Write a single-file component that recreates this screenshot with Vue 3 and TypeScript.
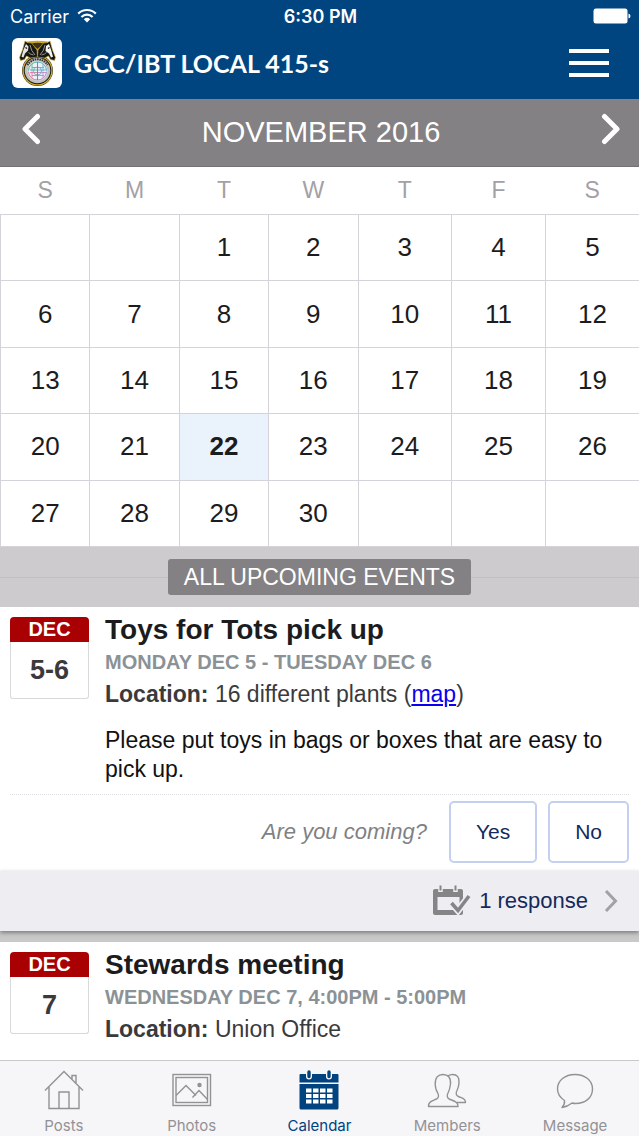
<script setup lang="ts">
import { ref } from 'vue'

interface EventItem {
  id: number
  month: string
  days: string
  title: string
  when: string
  place: string
  hasMap: boolean
  description: string
  responses: string
}

const weekdays: string[] = ['S', 'M', 'T', 'W', 'T', 'F', 'S']
const firstWeekday = 2
const dayCount = 30
const today = 22

const weeks: (number | null)[][] = Array.from({ length: 5 }, (_, w) =>
  Array.from({ length: 7 }, (_, d) => {
    const day = w * 7 + d - firstWeekday + 1
    return day >= 1 && day <= dayCount ? day : null
  })
)

const events: EventItem[] = [
  {
    id: 1,
    month: 'DEC',
    days: '5-6',
    title: 'Toys for Tots pick up',
    when: 'MONDAY DEC 5 - TUESDAY DEC 6',
    place: '16 different plants',
    hasMap: true,
    description: 'Please put toys in bags or boxes that are easy to pick up.',
    responses: '1 response'
  },
  {
    id: 2,
    month: 'DEC',
    days: '7',
    title: 'Stewards meeting',
    when: 'WEDNESDAY DEC 7, 4:00PM - 5:00PM',
    place: 'Union Office',
    hasMap: false,
    description: '',
    responses: ''
  }
]

const tabs: string[] = ['Posts', 'Photos', 'Calendar', 'Members', 'Message']
const activeTab = ref<string>('Calendar')
</script>

<template>
  <div class="app">
    <header class="top">
      <div class="status">
        <span class="carrier">
          Carrier
          <svg class="wifi" viewBox="0 0 20 16" aria-hidden="true">
            <path d="M1.2 5.6a12.6 12.6 0 0 1 17.6 0M4.4 9a8 8 0 0 1 11.2 0" fill="none" stroke="#fff" stroke-width="2.2" />
            <path d="M6.8 11.3a4.7 4.7 0 0 1 6.4 0L10 14.6z" fill="#fff" />
          </svg>
        </span>
        <span class="clock">6:30 PM</span>
        <span class="power">
          <svg class="battery" viewBox="0 0 38 16" aria-hidden="true">
            <rect x="0.5" y="0.5" width="34" height="15" rx="2.5" fill="#fff" />
            <path d="M35.5 5.5q2 .5 2 2.5t-2 2.5z" fill="#fff" />
          </svg>
        </span>
      </div>
      <div class="nav">
        <svg class="logo" viewBox="0 0 50 50" aria-hidden="true">
          <rect width="50" height="50" rx="6" fill="#fff" />
          <circle cx="25.500" cy="32.500" r="15.400" fill="#151512" />
          <circle cx="25.500" cy="32.500" r="14.400" fill="none" stroke="#d0ac2c" stroke-width="1.300" />
          <path d="M15 3.500Q25.500 2 36 3.500L26.500 14h-2z" fill="#c9a72d" />
          <path d="M19 5.500Q25.500 4 32 5.500L25.500 11z" fill="#3a331c" />
          <path d="M13 3l2.500 1.500 4 .5 5.500 7 .5 7-7 1-4-2-2 3.500-4 1-1-3L10.500 12z" fill="#171715" stroke="#d0ac2c" stroke-width="0.600" />
          <path d="M38 3l-2.500 1.500-4 .5-5.500 7-.5 7 7 1 4-2 2 3.500 4 1 1-3L40.500 12z" fill="#171715" stroke="#d0ac2c" stroke-width="0.600" />
          <path d="M14 6l2.500 2.500-.5 4-3 3-1.500 4-2-.8 1.700-6.200z" fill="#e4e4e0" />
          <path d="M37 6l-3 2-.5 5 3.500 2.500 2 4 2-.8-1.700-6.200z" fill="#f6f6f3" />
          <path d="M13.500 9.500l1.500 1M37.500 9.500l-1.500 1" stroke="#151512" stroke-width="1.300" fill="none" />
          <path d="M18 7q1 6 5 10M33 7q-1 6-5 10M16.500 14.500q2 2 5 2.500M34.500 14.500q-2 2-5 2.500" stroke="#a3a39d" stroke-width="0.900" fill="none" />
          <circle cx="25.500" cy="32.500" r="12.800" fill="#c1c1be" />
          <path d="M15.500 27a11.600 11.600 0 0 1 20 0" fill="none" stroke="#34342f" stroke-width="2" stroke-dasharray="1.500 0.800" />
          <circle cx="25.500" cy="33" r="10" fill="#eef1f3" />
          <g fill="none" stroke-width="0.900">
            <circle cx="25.500" cy="33" r="9.200" stroke="#b7c9d2" />
            <path d="M16.500 32.500a9 9 0 0 1 9-8.500M20 29.500h5M20 26v7M18 32h7.500" stroke="#4fb9a2" />
            <path d="M25.500 24a9 9 0 0 1 9 8.500M26 29.500h6M31 26v7M26 32h8" stroke="#58b5d8" />
            <path d="M16.500 34a9 9 0 0 0 9 8M18 34.500h7M20 33.500v6M20 37.500h5" stroke="#e078a5" />
            <path d="M34.500 34a9 9 0 0 1-9 8M26 34.500h8M31 33.500v6M26 37.500h6" stroke="#bd8bd0" />
            <circle cx="25.500" cy="33" r="4" stroke="#7ba7c4" />
            <path d="M25.500 24v18" stroke="#806f9e" />
          </g>
        </svg>
        <h1 class="name">GCC/IBT LOCAL 415-s</h1>
        <button class="menu" type="button" aria-label="Menu">
          <span></span><span></span><span></span>
        </button>
      </div>
    </header>

    <main class="content">
      <div class="month">
        <button type="button" class="arrow" aria-label="Previous month">
          <svg viewBox="0 0 20 32" aria-hidden="true"><path d="M16.500 3.500L4 16l12.500 12.500" /></svg>
        </button>
        <h2>NOVEMBER 2016</h2>
        <button type="button" class="arrow" aria-label="Next month">
          <svg viewBox="0 0 20 32" aria-hidden="true"><path d="M3.500 3.500L16 16 3.500 28.500" /></svg>
        </button>
      </div>

      <table class="calendar">
        <thead>
          <tr>
            <th v-for="(d, i) in weekdays" :key="i" scope="col">{{ d }}</th>
          </tr>
        </thead>
        <tbody>
          <tr v-for="(week, w) in weeks" :key="w">
            <td v-for="(day, d) in week" :key="d" :class="{ today: day === today }">{{ day }}</td>
          </tr>
        </tbody>
      </table>

      <div class="divider">
        <h3>ALL UPCOMING EVENTS</h3>
      </div>

      <article v-for="e in events" :key="e.id" class="event">
        <div class="info">
          <div class="date">
            <span class="date-month">{{ e.month }}</span>
            <span class="date-day">{{ e.days }}</span>
          </div>
          <div class="details">
            <h4>{{ e.title }}</h4>
            <p class="when">{{ e.when }}</p>
            <p class="where">
              <strong>Location:</strong> {{ e.place }}<template v-if="e.hasMap"> (<a href="#map">map</a>)</template>
            </p>
            <p v-if="e.description" class="description">{{ e.description }}</p>
          </div>
        </div>
        <template v-if="e.responses">
          <div class="rsvp">
            <span class="ask">Are you coming?</span>
            <button type="button">Yes</button>
            <button type="button">No</button>
          </div>
          <a class="responses" href="#responses">
            <svg class="cal-check" viewBox="0 0 38 32" aria-hidden="true">
              <path d="M2 4h26a2 2 0 0 1 2 2v22a2 2 0 0 1-2 2H2a2 2 0 0 1-2-2V6a2 2 0 0 1 2-2z" fill="#858588" />
              <path d="M4.500 12h22v13h-22z" fill="#eeeef2" />
              <path d="M7.500 1v6M22.500 1v6" stroke="#eeeef2" stroke-width="4.500" />
              <path d="M7.500 0.500v5M22.500 0.500v5" stroke="#858588" stroke-width="2" />
              <path d="M18.500 18l6.500 7.500L36 11" fill="none" stroke="#eeeef2" stroke-width="7" />
              <path d="M18.500 18l6.500 7.500L36 11" fill="none" stroke="#858588" stroke-width="3.500" />
            </svg>
            <span>{{ e.responses }}</span>
            <svg class="more" viewBox="0 0 14 24" aria-hidden="true">
              <path d="M2 2l9.500 10L2 22" fill="none" stroke="#a2a2a5" stroke-width="3" />
            </svg>
          </a>
        </template>
      </article>
    </main>

    <nav class="tabs">
      <button
        v-for="t in tabs"
        :key="t"
        type="button"
        :class="{ active: activeTab === t }"
        @click="activeTab = t"
      >
        <svg viewBox="0 0 40 40" aria-hidden="true">
          <g v-if="t === 'Posts'" fill="none" stroke="currentColor" stroke-width="1.400">
            <path d="M1 20.500L20 1.500l19 19M5 17v21.500h30V17M15 38.500V22h10v16.500M28 9V5.500h4V13" />
          </g>
          <g v-else-if="t === 'Photos'" fill="none" stroke="currentColor" stroke-width="1.400">
            <rect x="1" y="4.500" width="37.500" height="31" />
            <rect x="4" y="7.500" width="31.500" height="25" />
            <path d="M4 25.500l10-10 10 10M20.500 27.500l6.500-7 8.500 9" />
            <circle cx="27.500" cy="15" r="1.500" fill="currentColor" />
          </g>
          <g v-else-if="t === 'Calendar'">
            <path d="M.5 5a1 1 0 0 1 1-1h37a1 1 0 0 1 1 1v7.500H.5zM.5 14h39v24a1.500 1.500 0 0 1-1.500 1.500H2A1.500 1.500 0 0 1 .5 38z" fill="currentColor" />
            <path d="M10 2v4.500M30 2v4.500" stroke="#f7f7f8" stroke-width="6" stroke-linecap="round" />
            <path d="M10 2v4.500M30 2v4.500" stroke="currentColor" stroke-width="3.400" stroke-linecap="round" />
            <path d="M7 18.500h5.500v4H7zM14 18.500h5.500v4H14zM21 18.500h5.500v4H21zM28 18.500h5.500v4H28zM7 24h5.500v4H7zM14 24h5.500v4H14zM21 24h5.500v4H21zM28 24h5.500v4H28zM7 29.500h5.500v4H7zM14 29.500h5.500v4H14zM21 29.500h5.500v4H21zM28 29.500h5.500v4H28z" fill="#fff" />
          </g>
          <g v-else-if="t === 'Members'" fill="none" stroke="currentColor" stroke-width="1.400" stroke-linejoin="round">
            <path d="M1.500 36.500c0-5 3.500-5.500 8-7.500 2.500-1.200 2.500-4 1-6.500-1.500-2-2-4-2.300-8C8 7.500 11 4.500 16 4.500s8 3 7.500 9.500c-.5 4-1 6-2.300 8.500-1.400 2.500-1.400 5.300 1 6.500 4.500 2 8.800 2.500 8.800 7.500z" />
            <path d="M20.500 6c1.800-1 3-1.500 5-1.500 4.800 0 7 3 6.500 8.500-.3 4-1 5.500-2 7.500-1.500 2.500-1 5 1.500 6 4 1.800 7 2 7 6h-8.500" />
          </g>
          <g v-else fill="none" stroke="currentColor" stroke-width="1.400" stroke-linejoin="round">
            <path d="M9.500 30.500C5 27.500 2.500 23.500 2.500 19 2.500 10.500 10 4.500 20 4.500S37.500 10.500 37.500 19c0 9-7.500 14.500-17 14.500q-2 0-3.500-.5c-3 2.500-6 4-10 4.500 2-2 2.800-4.300 2.500-7z" />
          </g>
        </svg>
        <span>{{ t }}</span>
      </button>
    </nav>
  </div>
</template>

<style>
body {
  margin: 0;
}
</style>

<style scoped>
.app {
  height: 100vh;
  display: flex;
  flex-direction: column;
  overflow: hidden;
  background: #fff;
  color: #1c1c1e;
  font-family: "Liberation Sans", Arial, sans-serif;
}
h1, h2, h3, h4, p {
  margin: 0;
}
button {
  font-family: inherit;
  padding: 0;
  border: 0;
  background: none;
  cursor: pointer;
}
svg {
  display: block;
  flex: none;
}
.top {
  flex: none;
  background: #004480;
  color: #fff;
}
.status {
  display: grid;
  grid-template-columns: 1fr auto 1fr;
  align-items: center;
  height: 32px;
  padding: 0 8px 0 10px;
  font-family: Inter, sans-serif;
  font-size: 18px;
}
.carrier {
  display: flex;
  align-items: center;
  gap: 8px;
}
.wifi {
  width: 20px;
  height: 16px;
}
.clock {
  font-weight: 600;
}
.power {
  justify-self: end;
}
.battery {
  width: 38px;
  height: 16px;
}
.nav {
  display: flex;
  align-items: center;
  height: 62px;
  padding: 0 30px 5px 12px;
}
.logo {
  width: 50px;
  height: 50px;
}
.name {
  flex: 1;
  margin-left: 12px;
  font-family: Lato, sans-serif;
  font-size: 25px;
  font-weight: 700;
}
.menu {
  display: flex;
  flex-direction: column;
  gap: 8px;
  width: 40px;
}
.menu span {
  height: 4px;
  background: #fff;
}
.content {
  flex: 1;
  min-height: 0;
  overflow: hidden;
}
.month {
  display: flex;
  align-items: center;
  justify-content: space-between;
  height: 68px;
  padding: 0 18px 0 21px;
  background: #838184;
  border-bottom: 1px solid #747275;
  box-sizing: border-box;
  color: #fff;
}
.month h2 {
  font-size: 29px;
  font-weight: 400;
}
.arrow {
  padding-bottom: 8px;
}
.arrow svg {
  width: 20px;
  height: 32px;
}
.arrow path {
  fill: none;
  stroke: #fff;
  stroke-width: 5;
  stroke-linecap: round;
  stroke-linejoin: round;
}
.calendar {
  width: 100%;
  height: 380px;
  table-layout: fixed;
  border-collapse: collapse;
}
.calendar th {
  height: 47px;
  padding: 0;
  color: #a3a1a5;
  font-size: 23px;
  font-weight: 400;
}
.calendar th:nth-child(-n + 4) {
  width: 14%;
}
.calendar td {
  padding: 0;
  border: 1px solid #d5d3d9;
  font-size: 26px;
  text-align: center;
}
.calendar td:last-child {
  border-right: 0;
}
.calendar .today {
  background: #eaf3fc;
  font-weight: 700;
}
.divider {
  display: flex;
  align-items: center;
  height: 60px;
  background: #cecbcf;
}
.divider::before,
.divider::after {
  content: "";
  flex: 1;
  height: 1px;
  background: #c2bfc3;
}
.divider h3 {
  padding: 0 16px;
  border-radius: 3px;
  background: #838184;
  color: #fff;
  font-size: 23px;
  font-weight: 400;
  line-height: 36px;
}
.event + .event {
  border-top: 11px solid #c9c9c9;
}
.info {
  display: flex;
  gap: 16px;
  padding: 6px 10px 10px;
}
.date {
  flex: none;
  display: flex;
  flex-direction: column;
  align-self: flex-start;
  width: 79px;
  margin-top: 4px;
  font-weight: 700;
  text-align: center;
}
.date-month {
  border-radius: 4px 4px 0 0;
  background: #a90003;
  color: #fff;
  font-size: 20px;
  line-height: 25px;
}
.date-day {
  border: 1px solid #d9d9db;
  border-top: 0;
  border-radius: 0 0 3px 3px;
  color: #3a3a3c;
  font-size: 27px;
  line-height: 56px;
}
.details {
  flex: 1;
  min-width: 0;
}
.details h4 {
  font-size: 28px;
  line-height: 34px;
}
.when {
  color: #8a9296;
  font-size: 20px;
  font-weight: 700;
  line-height: 30px;
}
.where {
  color: #3a3a3c;
  font-size: 23px;
  line-height: 34px;
}
.where a {
  color: #0b00ee;
}
.description {
  margin-top: 15px;
  color: #111;
  font-size: 23px;
  line-height: 29px;
}
.rsvp {
  display: flex;
  align-items: center;
  justify-content: flex-end;
  gap: 11px;
  margin: 0 10px;
  padding: 6px 0 8px;
  border-top: 1px dotted #dcdce2;
}
.ask {
  margin-right: 11px;
  color: #7f8184;
  font-size: 22px;
  font-style: italic;
}
.rsvp button {
  height: 62px;
  padding: 0 25px;
  border: 2px solid #c3d0f0;
  border-radius: 5px;
  color: #15295c;
  font-size: 21px;
}
.responses {
  display: flex;
  align-items: center;
  justify-content: flex-end;
  height: 60px;
  padding-right: 21px;
  position: relative;
  background: #eeeef2;
  box-shadow: 0 2px 4px #7f7f80;
  color: #15295c;
  font-size: 22px;
  text-decoration: none;
}
.cal-check {
  width: 38px;
  height: 32px;
  margin-right: 8px;
}
.more {
  width: 14px;
  height: 24px;
  margin-left: 16px;
}
.tabs {
  flex: none;
  display: grid;
  grid-template-columns: repeat(5, 1fr);
  border-top: 1px solid #c9c8cb;
  background: #f6f6f8;
}
.tabs button {
  display: flex;
  flex-direction: column;
  align-items: center;
  gap: 6px;
  height: 75px;
  padding-top: 9px;
  box-sizing: border-box;
  color: #929296;
  font-family: Inter, sans-serif;
  font-size: 15px;
  line-height: 20px;
}
.tabs svg {
  width: 40px;
  height: 40px;
}
.tabs .active {
  color: #00437f;
}
</style>
